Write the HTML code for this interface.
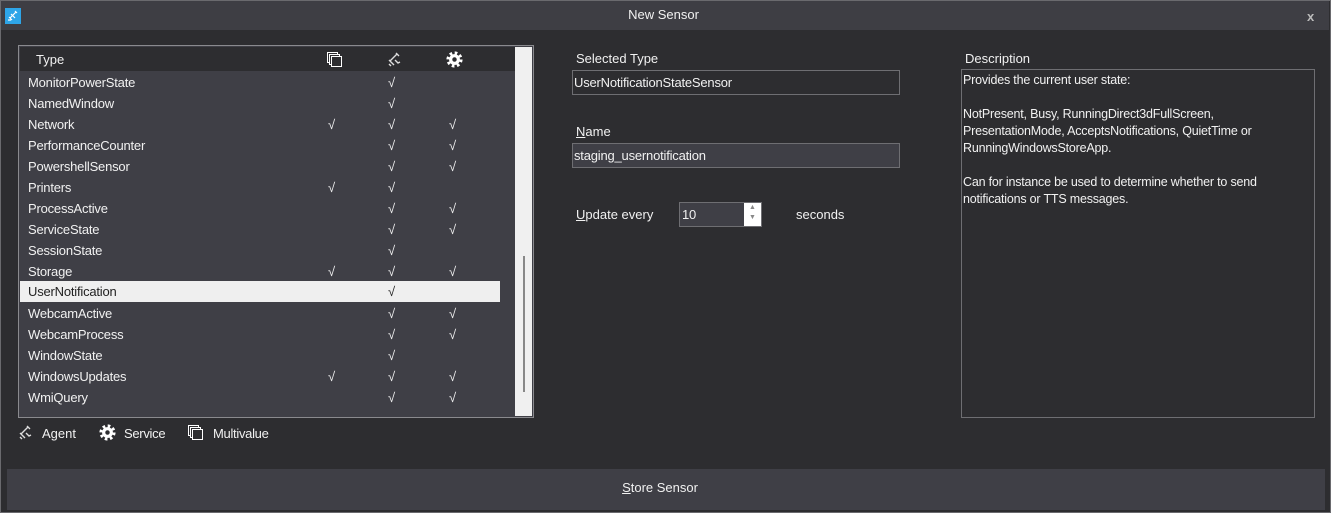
<!DOCTYPE html>
<html><head><style>
*{margin:0;padding:0;box-sizing:border-box}
body{width:1331px;height:513px;background:#2d2d30;font-family:"Liberation Sans",sans-serif;font-size:13px;color:#f1f1f1;position:relative;overflow:hidden}
.abs{position:absolute}
#win{left:0;top:0;width:1331px;height:513px;border:1px solid #6a6a6e}
#title{left:1px;top:1px;width:1328px;height:29px;background:#3e3e44}
#list{left:18px;top:45px;width:516px;height:373px;border:1px solid #8a8a8e;background:#3f3f46}
#hdr{left:1px;top:1px;width:495px;height:24px;background:#2d2d30}
.row{position:absolute;left:1px;width:480px;height:21px;line-height:21px;padding-left:8px;letter-spacing:-0.2px}
.row span{position:absolute;top:0}
.sel{background:#efefef;color:#222}
.c1{left:308px}.c2{left:368px}.c3{left:429px}
#sb{left:496px;top:1px;width:17px;height:369px;background:#f0f0f0}
#thumb{left:8px;top:209px;width:2px;height:136px;background:#888}
.box{border:1px solid #6e6e72;background:#2d2d30;height:25px;line-height:23px;padding-left:1px;letter-spacing:-0.2px}
#btn{left:7px;top:469px;width:1318px;height:41px;background:#3f3f46;text-align:center;line-height:38px;padding-right:12px}
u{text-decoration:underline}
</style></head><body>
<div id="win" class="abs"></div>
<div id="title" class="abs"></div>
<div class="abs" style="left:5px;top:8px;width:16px;height:16px;background:#2ea5e8"><svg width="16" height="16" viewBox="0 0 16 16"><path d="M10 3l2 2M11 4l-6 6M4 9l3 3M3 12h3M6 6l4 4" stroke="#fff" stroke-width="1.2" fill="none"/></svg></div>
<div class="abs" style="left:0;width:1331px;top:7px;text-align:center;padding-right:4px">New Sensor</div>
<div class="abs" style="left:1307px;top:9px;color:#bbb;font-weight:bold;font-size:13px">x</div>

<div id="list" class="abs">
<div id="hdr" class="abs"></div>
<div class="abs" style="left:17px;top:6px">Type</div>
<svg class="abs" style="left:307px;top:5px" width="17" height="17" viewBox="0 0 17 17"><rect x="1.5" y="1.5" width="10" height="10" fill="none" stroke="#fff"/><rect x="3.5" y="3.5" width="10" height="10" fill="#2d2d30" stroke="#fff"/><rect x="5.5" y="5.5" width="10" height="10" fill="#2d2d30" stroke="#fff"/></svg>
<svg class="abs" style="left:367px;top:5px" width="17" height="17" viewBox="0 0 17 17"><path d="M10 2l3 3M11 3l-7 7M3 9l5 5M3 13l2 2M9 9l3 3l2 -1" stroke="#ddd" stroke-width="1.4" fill="none"/></svg>
<svg class="abs" style="left:427px;top:5px" width="17" height="17" viewBox="0 0 16 16"><circle cx="8" cy="8" r="6" fill="none" stroke="#fff" stroke-width="3.2" stroke-dasharray="2.4 2.31"/><circle cx="8" cy="8" r="3.6" fill="none" stroke="#fff" stroke-width="3"/></svg>
<div class="row" style="top:26px">MonitorPowerState<span class="c2">√</span></div>
<div class="row" style="top:47px">NamedWindow<span class="c2">√</span></div>
<div class="row" style="top:68px">Network<span class="c1">√</span><span class="c2">√</span><span class="c3">√</span></div>
<div class="row" style="top:89px">PerformanceCounter<span class="c2">√</span><span class="c3">√</span></div>
<div class="row" style="top:110px">PowershellSensor<span class="c2">√</span><span class="c3">√</span></div>
<div class="row" style="top:131px">Printers<span class="c1">√</span><span class="c2">√</span></div>
<div class="row" style="top:152px">ProcessActive<span class="c2">√</span><span class="c3">√</span></div>
<div class="row" style="top:173px">ServiceState<span class="c2">√</span><span class="c3">√</span></div>
<div class="row" style="top:194px">SessionState<span class="c2">√</span></div>
<div class="row" style="top:215px">Storage<span class="c1">√</span><span class="c2">√</span><span class="c3">√</span></div>
<div class="row sel" style="top:235px">UserNotification<span class="c2">√</span></div>
<div class="row" style="top:257px">WebcamActive<span class="c2">√</span><span class="c3">√</span></div>
<div class="row" style="top:278px">WebcamProcess<span class="c2">√</span><span class="c3">√</span></div>
<div class="row" style="top:299px">WindowState<span class="c2">√</span></div>
<div class="row" style="top:320px">WindowsUpdates<span class="c1">√</span><span class="c2">√</span><span class="c3">√</span></div>
<div class="row" style="top:341px">WmiQuery<span class="c2">√</span><span class="c3">√</span></div>
<div id="sb" class="abs"><div id="thumb" class="abs"></div></div>
</div>

<svg class="abs" style="left:17px;top:424px" width="17" height="17" viewBox="0 0 17 17"><path d="M10 2l3 3M11 3l-7 7M3 9l5 5M3 13l2 2M9 9l3 3l2 -1" stroke="#ddd" stroke-width="1.4" fill="none"/></svg>
<div class="abs" style="left:42px;top:426px">Agent</div>
<svg class="abs" style="left:99px;top:424px" width="17" height="17" viewBox="0 0 16 16"><circle cx="8" cy="8" r="6" fill="none" stroke="#fff" stroke-width="3.2" stroke-dasharray="2.4 2.31"/><circle cx="8" cy="8" r="3.6" fill="none" stroke="#fff" stroke-width="3"/></svg>
<div class="abs" style="left:124px;top:426px;letter-spacing:-0.3px">Service</div>
<svg class="abs" style="left:187px;top:424px" width="17" height="17" viewBox="0 0 17 17"><rect x="1.5" y="1.5" width="10" height="10" fill="none" stroke="#fff"/><rect x="3.5" y="3.5" width="10" height="10" fill="#2d2d30" stroke="#fff"/><rect x="5.5" y="5.5" width="10" height="10" fill="#2d2d30" stroke="#fff"/></svg>
<div class="abs" style="left:213px;top:426px;letter-spacing:-0.3px">Multivalue</div>

<div class="abs" style="left:576px;top:51px">Selected Type</div>
<div class="abs box" style="left:572px;top:70px;width:328px">UserNotificationStateSensor</div>
<div class="abs" style="left:576px;top:124px"><u>N</u>ame</div>
<div class="abs box" style="left:572px;top:143px;width:328px;background:#3f3f46">staging_usernotification</div>
<div class="abs" style="left:576px;top:207px"><u>U</u>pdate every</div>
<div class="abs box" style="left:679px;top:202px;width:83px;height:25px;background:#3f3f46;padding-left:2px">10</div>
<div class="abs" style="left:744px;top:203px;width:17px;height:23px;background:#fff;color:#888;font-size:7px;line-height:10px;text-align:center">▲<br>▼</div>
<div class="abs" style="left:796px;top:207px">seconds</div>

<div class="abs" style="left:965px;top:51px">Description</div>
<div class="abs" style="left:961px;top:69px;width:354px;height:349px;border:1px solid #6e6e72;padding:2px 1px;font-size:12.5px;line-height:17px;letter-spacing:-0.2px">Provides the current user state:<br><br>NotPresent, Busy, RunningDirect3dFullScreen, PresentationMode, AcceptsNotifications, QuietTime or RunningWindowsStoreApp.<br><br>Can for instance be used to determine whether to send notifications or TTS messages.</div>

<div id="btn" class="abs"><u>S</u>tore Sensor</div>
</body></html>
